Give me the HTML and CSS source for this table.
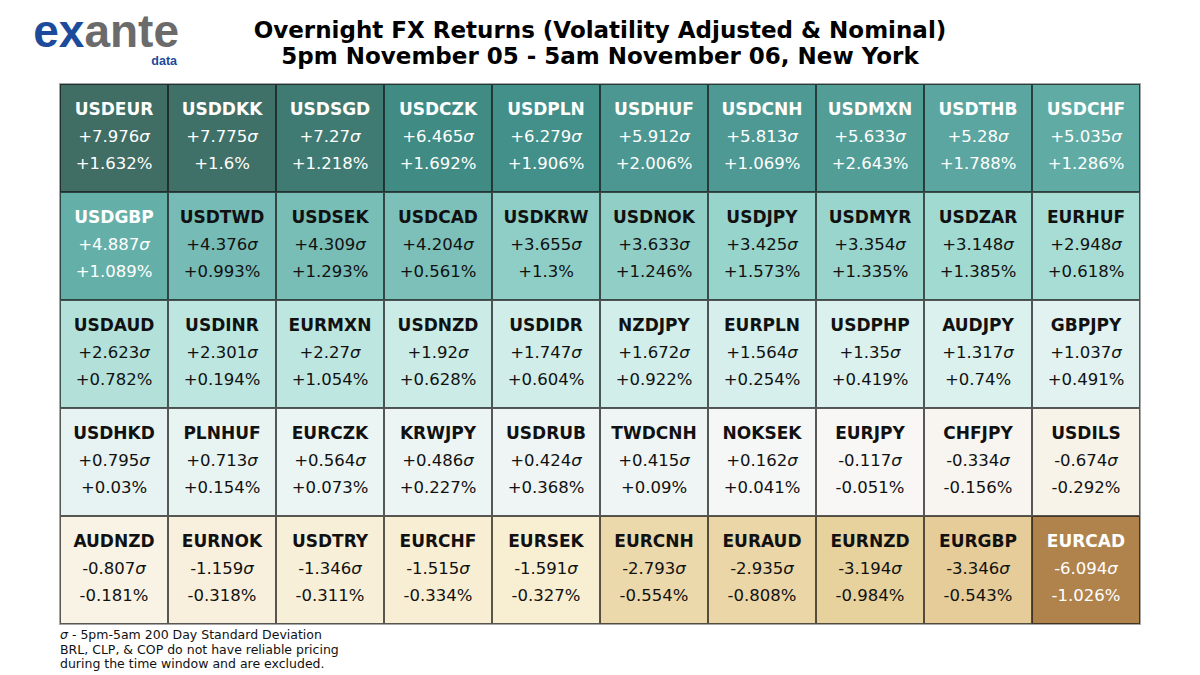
FILE: index.html
```html
<!DOCTYPE html>
<html>
<head>
<meta charset="utf-8">
<link rel="stylesheet" href="styles.css">
</head>
<body>
<div class="page">
  <header class="header">
    <div class="logo">
      <div class="logo-word"><span class="ex">ex</span><span class="ante">ante</span></div>
      <div class="logo-data">data</div>
    </div>
    <div class="title">
      <div>Overnight FX Returns (Volatility Adjusted &amp; Nominal)</div>
      <div>5pm November 05 - 5am November 06, New York</div>
    </div>
    <div></div>
  </header>
  <main class="grid" id="grid">
    <div class="cell light" data-s="7.976"><b>USDEUR</b><span>+7.976<i>σ</i></span><span>+1.632%</span></div>
    <div class="cell light" data-s="7.775"><b>USDDKK</b><span>+7.775<i>σ</i></span><span>+1.6%</span></div>
    <div class="cell light" data-s="7.27"><b>USDSGD</b><span>+7.27<i>σ</i></span><span>+1.218%</span></div>
    <div class="cell light" data-s="6.465"><b>USDCZK</b><span>+6.465<i>σ</i></span><span>+1.692%</span></div>
    <div class="cell light" data-s="6.279"><b>USDPLN</b><span>+6.279<i>σ</i></span><span>+1.906%</span></div>
    <div class="cell light" data-s="5.912"><b>USDHUF</b><span>+5.912<i>σ</i></span><span>+2.006%</span></div>
    <div class="cell light" data-s="5.813"><b>USDCNH</b><span>+5.813<i>σ</i></span><span>+1.069%</span></div>
    <div class="cell light" data-s="5.633"><b>USDMXN</b><span>+5.633<i>σ</i></span><span>+2.643%</span></div>
    <div class="cell light" data-s="5.28"><b>USDTHB</b><span>+5.28<i>σ</i></span><span>+1.788%</span></div>
    <div class="cell light" data-s="5.035"><b>USDCHF</b><span>+5.035<i>σ</i></span><span>+1.286%</span></div>

    <div class="cell light" data-s="4.887"><b>USDGBP</b><span>+4.887<i>σ</i></span><span>+1.089%</span></div>
    <div class="cell" data-s="4.376"><b>USDTWD</b><span>+4.376<i>σ</i></span><span>+0.993%</span></div>
    <div class="cell" data-s="4.309"><b>USDSEK</b><span>+4.309<i>σ</i></span><span>+1.293%</span></div>
    <div class="cell" data-s="4.204"><b>USDCAD</b><span>+4.204<i>σ</i></span><span>+0.561%</span></div>
    <div class="cell" data-s="3.655"><b>USDKRW</b><span>+3.655<i>σ</i></span><span>+1.3%</span></div>
    <div class="cell" data-s="3.633"><b>USDNOK</b><span>+3.633<i>σ</i></span><span>+1.246%</span></div>
    <div class="cell" data-s="3.425"><b>USDJPY</b><span>+3.425<i>σ</i></span><span>+1.573%</span></div>
    <div class="cell" data-s="3.354"><b>USDMYR</b><span>+3.354<i>σ</i></span><span>+1.335%</span></div>
    <div class="cell" data-s="3.148"><b>USDZAR</b><span>+3.148<i>σ</i></span><span>+1.385%</span></div>
    <div class="cell" data-s="2.948"><b>EURHUF</b><span>+2.948<i>σ</i></span><span>+0.618%</span></div>

    <div class="cell" data-s="2.623"><b>USDAUD</b><span>+2.623<i>σ</i></span><span>+0.782%</span></div>
    <div class="cell" data-s="2.301"><b>USDINR</b><span>+2.301<i>σ</i></span><span>+0.194%</span></div>
    <div class="cell" data-s="2.27"><b>EURMXN</b><span>+2.27<i>σ</i></span><span>+1.054%</span></div>
    <div class="cell" data-s="1.92"><b>USDNZD</b><span>+1.92<i>σ</i></span><span>+0.628%</span></div>
    <div class="cell" data-s="1.747"><b>USDIDR</b><span>+1.747<i>σ</i></span><span>+0.604%</span></div>
    <div class="cell" data-s="1.672"><b>NZDJPY</b><span>+1.672<i>σ</i></span><span>+0.922%</span></div>
    <div class="cell" data-s="1.564"><b>EURPLN</b><span>+1.564<i>σ</i></span><span>+0.254%</span></div>
    <div class="cell" data-s="1.35"><b>USDPHP</b><span>+1.35<i>σ</i></span><span>+0.419%</span></div>
    <div class="cell" data-s="1.317"><b>AUDJPY</b><span>+1.317<i>σ</i></span><span>+0.74%</span></div>
    <div class="cell" data-s="1.037"><b>GBPJPY</b><span>+1.037<i>σ</i></span><span>+0.491%</span></div>

    <div class="cell" data-s="0.795"><b>USDHKD</b><span>+0.795<i>σ</i></span><span>+0.03%</span></div>
    <div class="cell" data-s="0.713"><b>PLNHUF</b><span>+0.713<i>σ</i></span><span>+0.154%</span></div>
    <div class="cell" data-s="0.564"><b>EURCZK</b><span>+0.564<i>σ</i></span><span>+0.073%</span></div>
    <div class="cell" data-s="0.486"><b>KRWJPY</b><span>+0.486<i>σ</i></span><span>+0.227%</span></div>
    <div class="cell" data-s="0.424"><b>USDRUB</b><span>+0.424<i>σ</i></span><span>+0.368%</span></div>
    <div class="cell" data-s="0.415"><b>TWDCNH</b><span>+0.415<i>σ</i></span><span>+0.09%</span></div>
    <div class="cell" data-s="0.162"><b>NOKSEK</b><span>+0.162<i>σ</i></span><span>+0.041%</span></div>
    <div class="cell" data-s="-0.117"><b>EURJPY</b><span>-0.117<i>σ</i></span><span>-0.051%</span></div>
    <div class="cell" data-s="-0.334"><b>CHFJPY</b><span>-0.334<i>σ</i></span><span>-0.156%</span></div>
    <div class="cell" data-s="-0.674"><b>USDILS</b><span>-0.674<i>σ</i></span><span>-0.292%</span></div>

    <div class="cell" data-s="-0.807"><b>AUDNZD</b><span>-0.807<i>σ</i></span><span>-0.181%</span></div>
    <div class="cell" data-s="-1.159"><b>EURNOK</b><span>-1.159<i>σ</i></span><span>-0.318%</span></div>
    <div class="cell" data-s="-1.346"><b>USDTRY</b><span>-1.346<i>σ</i></span><span>-0.311%</span></div>
    <div class="cell" data-s="-1.515"><b>EURCHF</b><span>-1.515<i>σ</i></span><span>-0.334%</span></div>
    <div class="cell" data-s="-1.591"><b>EURSEK</b><span>-1.591<i>σ</i></span><span>-0.327%</span></div>
    <div class="cell" data-s="-2.793"><b>EURCNH</b><span>-2.793<i>σ</i></span><span>-0.554%</span></div>
    <div class="cell" data-s="-2.935"><b>EURAUD</b><span>-2.935<i>σ</i></span><span>-0.808%</span></div>
    <div class="cell" data-s="-3.194"><b>EURNZD</b><span>-3.194<i>σ</i></span><span>-0.984%</span></div>
    <div class="cell" data-s="-3.346"><b>EURGBP</b><span>-3.346<i>σ</i></span><span>-0.543%</span></div>
    <div class="cell light" data-s="-6.094"><b>EURCAD</b><span>-6.094<i>σ</i></span><span>-1.026%</span></div>
  </main>
  <footer class="note">
    <div><i>σ</i> - 5pm-5am 200 Day Standard Deviation</div>
    <div>BRL, CLP, &amp; COP do not have reliable pricing</div>
    <div>during the time window and are excluded.</div>
  </footer>
</div>
<script src="script.js"></script>
</body>
</html>
```

FILE: styles.css
```css
html, body {
  margin: 0;
  padding: 0;
  background: #ffffff;
}

.page {
  width: 1200px;
  height: 675px;
  overflow: hidden;
  font-family: "DejaVu Sans", "Liberation Sans", sans-serif;
  color: #111;
}

.header {
  display: grid;
  grid-template-columns: 1fr auto 1fr;
  height: 84px;
  box-sizing: border-box;
}

.logo {
  padding: 10px 0 0 33px;
  width: 146px;
  display: flex;
  flex-direction: column;
  align-items: flex-end;
  font-family: "Liberation Sans", Arial, sans-serif;
  font-weight: bold;
}

.logo-word {
  font-size: 46px;
  line-height: 42px;
  letter-spacing: 0;
  white-space: nowrap;
}

.ex {
  color: #1d4b9b;
}

.ante {
  color: #6b6b6b;
}

.logo-data {
  font-size: 12.5px;
  line-height: 12px;
  color: #1d4b9b;
  margin-top: 3px;
  margin-right: 2px;
}

.title {
  padding-top: 17px;
  font-weight: bold;
  font-size: 23px;
  line-height: 26px;
  text-align: center;
  color: #000;
}

.grid {
  margin-left: 60px;
  width: 1080px;
  height: 540px;
  display: grid;
  grid-template-columns: repeat(10, 1fr);
  grid-template-rows: repeat(5, 1fr);
  box-sizing: border-box;
  outline: 1px solid rgba(0, 0, 0, 0.35);
}

.cell {
  display: flex;
  flex-direction: column;
  align-items: center;
  justify-content: center;
  border: 1px solid rgba(20, 20, 20, 0.7);
  color: #111;
  font-size: 16.5px;
  line-height: 27px;
  padding-bottom: 3px;
}

.cell b {
  font-size: 17px;
}

.cell i {
  font-style: italic;
}

.cell.light {
  color: #ffffff;
}

.note {
  margin: 4px 0 0 60px;
  font-size: 12.5px;
  line-height: 14.5px;
  color: #111;
}
```

FILE: script.js
```js
(function () {
  var stops = [
    [84, 48, 5], [140, 81, 10], [191, 129, 45], [223, 194, 125], [246, 232, 195],
    [245, 245, 245], [199, 234, 229], [128, 205, 193], [53, 151, 143], [1, 102, 94], [0, 60, 48]
  ];
  var vmax = 7.976;
  var cells = document.querySelectorAll('.cell');
  for (var k = 0; k < cells.length; k++) {
    var s = parseFloat(cells[k].getAttribute('data-s'));
    var x = (s + vmax) / (2 * vmax);
    if (x < 0) x = 0;
    if (x > 1) x = 1;
    var p = x * 10;
    var i = Math.min(Math.floor(p), 9);
    var t = p - i;
    var a = stops[i], b = stops[i + 1];
    var rgb = [];
    for (var c = 0; c < 3; c++) {
      var v = a[c] + (b[c] - a[c]) * t;
      rgb.push(Math.round(0.75 * v + 0.25 * 255));
    }
    cells[k].style.backgroundColor = 'rgb(' + rgb.join(',') + ')';
  }
})();
```
